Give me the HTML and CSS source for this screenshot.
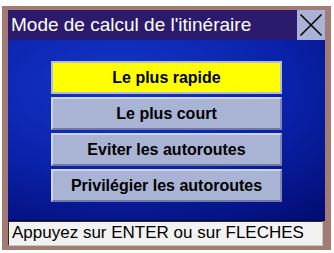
FILE: index.html
```html
<!DOCTYPE html>
<html>
<head>
<meta charset="utf-8">
<link rel="stylesheet" href="styles.css">
</head>
<body>
<div class="frame">
  <div class="titlebar">
    <div class="title">Mode de calcul de l'itinéraire</div>
    <div class="close">
      <svg width="28" height="30" viewBox="0 0 28 30"><path d="M3.5 4.5 L24.5 25.5 M24.5 4.5 L3.5 25.5" stroke="#000" stroke-width="1.6" fill="none"/></svg>
    </div>
  </div>
  <div class="panel">
    <div class="btn selected">Le plus rapide</div>
    <div class="btn">Le plus court</div>
    <div class="btn">Eviter les autoroutes</div>
    <div class="btn">Privilégier les autoroutes</div>
  </div>
  <div class="status">Appuyez sur ENTER ou sur FLECHES</div>
</div>
</body>
</html>
```
FILE: styles.css
```css
html, body {
  margin: 0;
  padding: 0;
  background: #fff;
}
body {
  width: 334px;
  height: 253px;
  overflow: hidden;
  font-family: "Liberation Sans", Arial, sans-serif;
}
.frame {
  margin: 6px 3px 3px 2px;
  height: 244px;
  box-sizing: border-box;
  padding: 4px 6px 3px 6px;
  background: #a27c74;
  display: flex;
  flex-direction: column;
}
.titlebar {
  display: flex;
  height: 30px;
}
.title {
  flex: 1;
  background: #2c1b6c;
  color: #fff;
  font-size: 19px;
  line-height: 30px;
  padding-left: 3px;
  white-space: nowrap;
}
.close {
  width: 28px;
  background: #aab2d8;
  display: flex;
}
.panel {
  height: 181px;
  box-sizing: border-box;
  padding-top: 21px;
  background: radial-gradient(ellipse 120% 110% at 35% 25%, #1436c8 0%, #0a22aa 45%, #030f7a 80%, #000860 100%);
  display: flex;
  flex-direction: column;
  align-items: center;
  gap: 3px;
  border-bottom: 1px solid #000a50;
}
.btn {
  width: 231px;
  height: 33px;
  box-sizing: border-box;
  background: #a9b3d3;
  border: 2px solid;
  border-color: #cdd4ee #7f89b6 #6f79a8 #cdd4ee;
  color: #000;
  font-weight: bold;
  font-size: 16px;
  display: flex;
  align-items: center;
  justify-content: center;
  white-space: nowrap;
}
.btn.selected {
  background: #ffff00;
  border-color: #b4bcdc;
}
.status {
  height: 25px;
  box-sizing: border-box;
  margin-right: 2px;
  background: #f2f2f2;
  border: 1px solid;
  border-color: #2a2a2a #c8c8c8 #c8c8c8 #2a2a2a;
  font-size: 17px;
  line-height: 22px;
  padding-left: 3px;
  white-space: nowrap;
}
```
